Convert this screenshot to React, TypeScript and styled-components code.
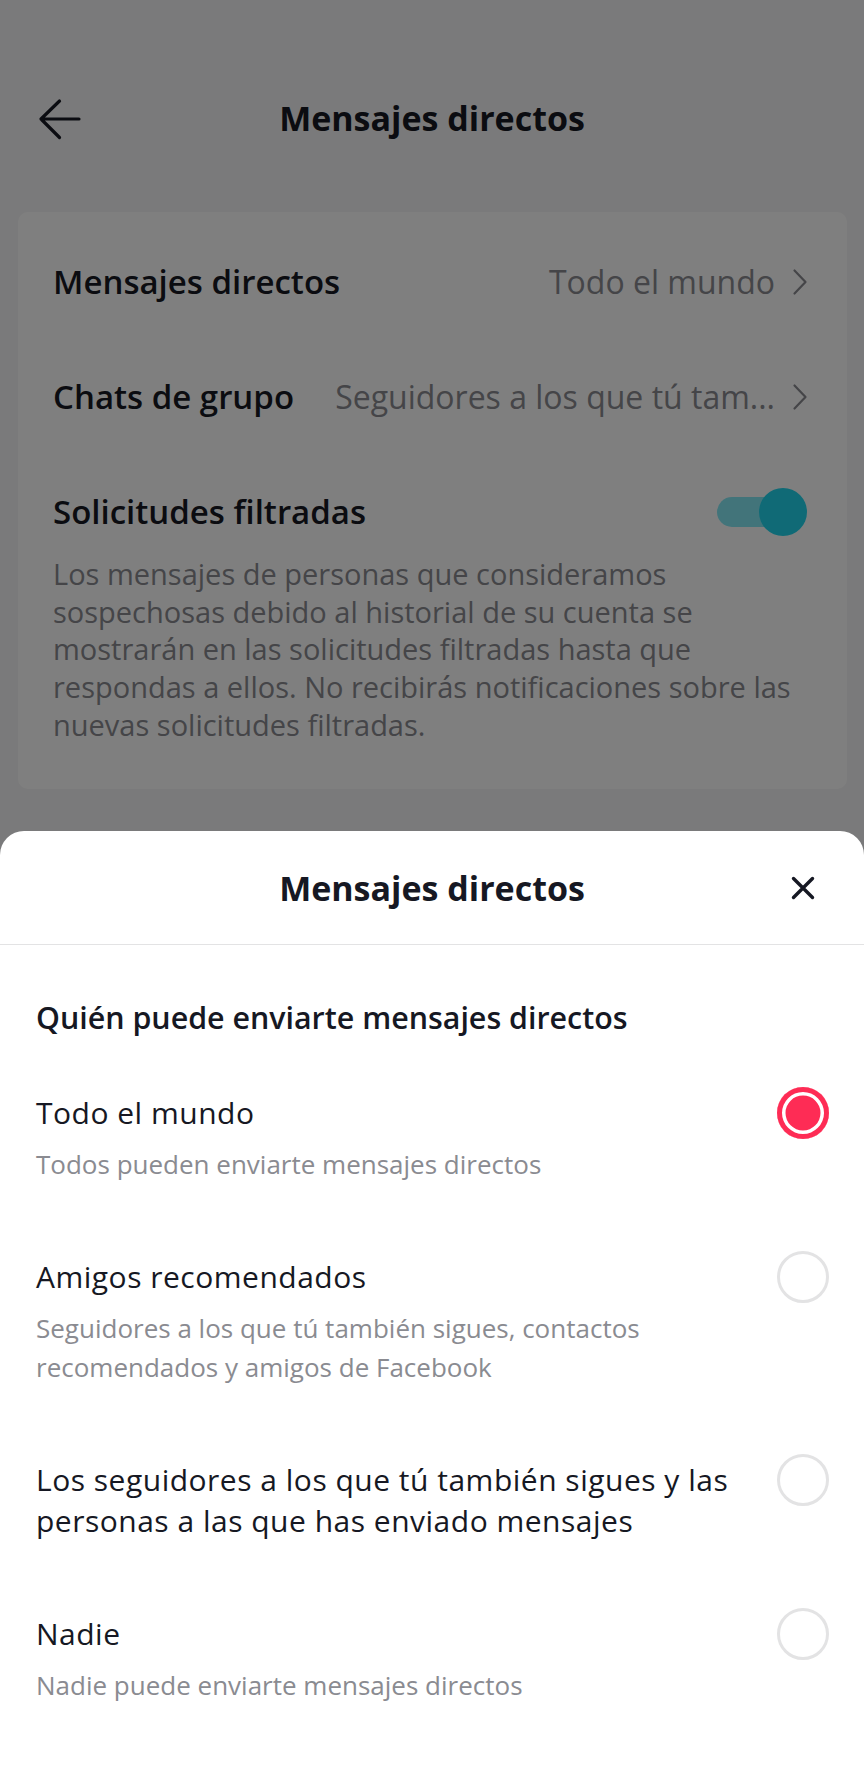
import React from "react";
import styled, { createGlobalStyle, css } from "styled-components";

const GlobalStyle = createGlobalStyle`
  * {
    box-sizing: border-box;
  }
  body {
    margin: 0;
    font-family: "Open Sans", "Liberation Sans", Arial, sans-serif;
    color: #161823;
    background: #f5f5f6;
  }
`;

type Option = {
  id: string;
  title: string;
  hint?: string;
};

const options: Option[] = [
  {
    id: "all",
    title: "Todo el mundo",
    hint: "Todos pueden enviarte mensajes directos",
  },
  {
    id: "friends",
    title: "Amigos recomendados",
    hint: "Seguidores a los que tú también sigues, contactos recomendados y amigos de Facebook",
  },
  {
    id: "mutual",
    title:
      "Los seguidores a los que tú también sigues y las personas a las que has enviado mensajes",
  },
  {
    id: "none",
    title: "Nadie",
    hint: "Nadie puede enviarte mensajes directos",
  },
];

const ArrowLeft = () => (
  <svg width="44" height="44" viewBox="0 0 44 44" fill="none">
    <path
      d="M41 23H3M21.5 5L3 23l18.5 18.5"
      stroke="#161823"
      strokeWidth="3.2"
      strokeLinecap="round"
      strokeLinejoin="round"
    />
  </svg>
);

const ChevronRight = () => (
  <svg width="16" height="28" viewBox="0 0 16 28" fill="none">
    <path
      d="M2.5 2.5L13.5 14L2.5 25.5"
      stroke="#8a8b91"
      strokeWidth="2.2"
      strokeLinecap="round"
      strokeLinejoin="round"
    />
  </svg>
);

const CloseIcon = () => (
  <svg width="28" height="28" viewBox="0 0 28 28" fill="none">
    <path
      d="M4.5 4.5l19 19M23.5 4.5l-19 19"
      stroke="#161823"
      strokeWidth="3.4"
      strokeLinecap="round"
    />
  </svg>
);

const App: React.FC = () => {
  const selected = "all";

  return (
    <>
      <GlobalStyle />
      <Screen>
        <Settings>
          <Header>
            <BackButton aria-label="Atrás">
              <ArrowLeft />
            </BackButton>
            <HeaderTitle>Mensajes directos</HeaderTitle>
          </Header>

          <Card>
            <SettingRow>
              <RowLabel>Mensajes directos</RowLabel>
              <RowValue>Todo el mundo</RowValue>
              <ChevronSlot>
                <ChevronRight />
              </ChevronSlot>
            </SettingRow>
            <SettingRow>
              <RowLabel>Chats de grupo</RowLabel>
              <RowValue>Seguidores a los que tú tam...</RowValue>
              <ChevronSlot>
                <ChevronRight />
              </ChevronSlot>
            </SettingRow>
            <FilterBlock>
              <ToggleLine>
                <RowLabel>Solicitudes filtradas</RowLabel>
                <Toggle $on>
                  <ToggleTrack />
                  <ToggleKnob />
                </Toggle>
              </ToggleLine>
              <FilterNote>
                Los mensajes de personas que consideramos sospechosas debido al
                historial de su cuenta se mostrarán en las solicitudes filtradas
                hasta que respondas a ellos. No recibirás notificaciones sobre
                las nuevas solicitudes filtradas.
              </FilterNote>
            </FilterBlock>
          </Card>
        </Settings>

        <Dim />

        <Sheet>
          <SheetHeader>
            <span />
            <SheetTitle>Mensajes directos</SheetTitle>
            <CloseButton aria-label="Cerrar">
              <CloseIcon />
            </CloseButton>
          </SheetHeader>
          <SheetBody>
            <SectionTitle>Quién puede enviarte mensajes directos</SectionTitle>
            <OptionList>
              {options.map((o) => (
                <OptionRow key={o.id}>
                  <OptionText>
                    <OptionTitle>{o.title}</OptionTitle>
                    {o.hint && <OptionHint>{o.hint}</OptionHint>}
                  </OptionText>
                  <Radio $checked={o.id === selected} />
                </OptionRow>
              ))}
            </OptionList>
          </SheetBody>
        </Sheet>
      </Screen>
    </>
  );
};

const Screen = styled.div`
  position: relative;
  width: 100%;
  height: 100vh;
  min-height: 1776px;
  overflow: hidden;
  background: #f5f5f6;
`;

const Settings = styled.div`
  display: flex;
  flex-direction: column;
  padding: 70px 17px 0 18px;
`;

const Header = styled.header`
  display: grid;
  grid-template-columns: 1fr auto 1fr;
  align-items: center;
  height: 96px;
  margin: 0 -17px 0 -18px;
`;

const BackButton = styled.button`
  justify-self: start;
  display: flex;
  margin-left: 38px;
  padding: 0;
  border: 0;
  background: none;
`;

const HeaderTitle = styled.h1`
  margin: 0;
  font-size: 34px;
  font-weight: 700;
  line-height: 44px;
  color: #161823;
`;

const Card = styled.section`
  margin-top: 46px;
  padding: 12px 40px 45px 35px;
  border-radius: 10px;
  background: #ffffff;
`;

const SettingRow = styled.div`
  display: flex;
  align-items: center;
  height: 115px;
`;

const RowLabel = styled.span`
  flex: none;
  font-size: 33px;
  font-weight: 600;
  line-height: 44px;
  color: #161823;
`;

const RowValue = styled.span`
  flex: 1;
  min-width: 0;
  margin-left: 28px;
  overflow: hidden;
  white-space: nowrap;
  text-overflow: ellipsis;
  text-align: right;
  font-size: 32px;
  line-height: 44px;
  color: #8a8b91;
`;

const ChevronSlot = styled.span`
  display: flex;
  flex: none;
  margin-left: 17px;
  margin-right: -1px;
`;

const FilterBlock = styled.div`
  padding-top: 34px;
`;

const ToggleLine = styled.div`
  display: flex;
  align-items: center;
  justify-content: space-between;
  height: 48px;
`;

const Toggle = styled.span<{ $on?: boolean }>`
  position: relative;
  width: 91px;
  height: 48px;
  flex: none;
  ${({ $on }) =>
    !$on &&
    css`
      opacity: 0.5;
    `}
`;

const ToggleTrack = styled.span`
  position: absolute;
  left: 1px;
  top: 9px;
  width: 80px;
  height: 30px;
  border-radius: 15px;
  background: rgba(32, 213, 236, 0.55);
`;

const ToggleKnob = styled.span`
  position: absolute;
  right: 0;
  top: 0;
  width: 48px;
  height: 48px;
  border-radius: 50%;
  background: #20d5ec;
`;

const FilterNote = styled.p`
  margin: 19px 0 0;
  font-size: 29px;
  line-height: 37.7px;
  color: #8a8b91;
`;

const Dim = styled.div`
  position: absolute;
  inset: 0;
  background: rgba(0, 0, 0, 0.5);
`;

const Sheet = styled.div`
  position: absolute;
  left: 0;
  right: 0;
  bottom: 0;
  height: 945px;
  border-radius: 24px 24px 0 0;
  background: #ffffff;
`;

const SheetHeader = styled.div`
  display: grid;
  grid-template-columns: 1fr auto 1fr;
  align-items: center;
  height: 114px;
  border-bottom: 1px solid #e3e3e4;
`;

const SheetTitle = styled.h2`
  margin: 0;
  font-size: 34px;
  font-weight: 700;
  line-height: 44px;
  color: #161823;
`;

const CloseButton = styled.button`
  justify-self: end;
  display: flex;
  margin-right: 47px;
  padding: 0;
  border: 0;
  background: none;
`;

const SheetBody = styled.div`
  padding: 53px 35px 0 36px;
`;

const SectionTitle = styled.h3`
  margin: 0;
  font-size: 30.4px;
  font-weight: 600;
  line-height: 40px;
  color: #161823;
`;

const OptionList = styled.div`
  display: flex;
  flex-direction: column;
  gap: 72px;
  margin-top: 54px;
`;

const OptionRow = styled.label`
  display: flex;
  align-items: flex-start;
  gap: 20px;
`;

const OptionText = styled.div`
  flex: 1;
  min-width: 0;
`;

const OptionTitle = styled.div`
  font-size: 30px;
  line-height: 41px;
  letter-spacing: 0.5px;
  color: #161823;
`;

const OptionHint = styled.div`
  margin-top: 12px;
  font-size: 26px;
  line-height: 39px;
  color: #8a8b91;
`;

const Radio = styled.span<{ $checked?: boolean }>`
  flex: none;
  width: 52px;
  height: 52px;
  margin-top: -5px;
  border-radius: 50%;
  ${({ $checked }) =>
    $checked
      ? css`
          background: #fe2c55;
          box-shadow: inset 0 0 0 5px #fe2c55, inset 0 0 0 8.5px #ffffff;
        `
      : css`
          border: 3px solid #e3e3e4;
        `}
`;

export default App;
